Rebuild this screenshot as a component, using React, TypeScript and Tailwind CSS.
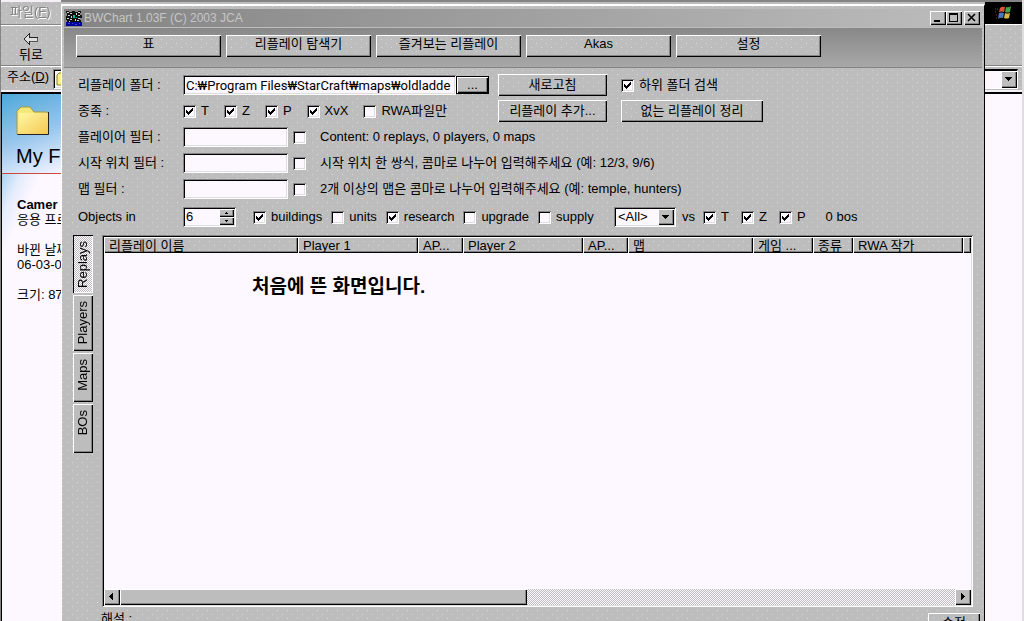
import { useState, type ReactNode } from "react";
import clsx from "clsx";

// classic 3D edges
const RAISED = "shadow-[inset_1px_1px_#fff,inset_-1px_-1px_#000,inset_-2px_-2px_#848484]";
const SUNKEN = "shadow-[inset_1px_1px_#848484,inset_-1px_-1px_#fff,inset_2px_2px_#000,inset_-2px_-2px_#dedede]";
const SPECKLE =
  "bg-[#bdbdbd] bg-[conic-gradient(at_1px_1px,transparent_75%,#dadada_0),conic-gradient(at_1px_1px,transparent_75%,#dadada_0)] bg-[length:10px_8px] bg-[position:0_0,5px_4px]";
const DITHER = "bg-[repeating-conic-gradient(#fdf7ff_0_25%,#bdbdbd_0_50%)] bg-[length:2px_2px]";

const COLUMNS = [
  { name: "리플레이 이름", width: 194 },
  { name: "Player 1", width: 120 },
  { name: "AP...", width: 45 },
  { name: "Player 2", width: 120 },
  { name: "AP...", width: 45 },
  { name: "맵", width: 125 },
  { name: "게임 ...", width: 60 },
  { name: "종류", width: 40 },
  { name: "RWA 작가", width: 110 },
];

const TABS = [
  { name: "Replays", height: "h-[58px]" },
  { name: "Players", height: "h-[56px]" },
  { name: "Maps", height: "h-[49px]" },
  { name: "BOs", height: "h-[49px]" },
];

function Button({ children, className }: { children: ReactNode; className?: string }) {
  return (
    <button type="button" className={clsx("shrink-0 whitespace-nowrap", SPECKLE, RAISED, className)}>
      {children}
    </button>
  );
}

function Check({ label, name, checked }: { label?: string; name?: string; checked?: boolean }) {
  return (
    <label className="flex shrink-0 items-center gap-[5px] whitespace-nowrap">
      <span className="grid">
        <input
          type="checkbox"
          defaultChecked={checked}
          aria-label={name}
          className={clsx("peer col-start-1 row-start-1 size-[13px] appearance-none bg-[#fdf7ff]", SUNKEN)}
        />
        <svg
          viewBox="0 0 13 13"
          shapeRendering="crispEdges"
          className="pointer-events-none invisible col-start-1 row-start-1 size-[13px] peer-checked:visible"
        >
          <path d="M3 5h1v1h1v1h1v-1h1v-1h1v-1h1v-1h1v3h-1v1h-1v1h-1v1h-1v1h-1v-1h-1v-1h-1z" />
        </svg>
      </span>
      {label}
    </label>
  );
}

function Arrow({ d, className }: { d: string; className: string }) {
  return (
    <svg viewBox="0 0 8 8" shapeRendering="crispEdges" className={className}>
      <path d={d} />
    </svg>
  );
}

function FilterRow({ id, label, checkName, hint }: { id: string; label: string; checkName: string; hint: string }) {
  return (
    <div className="flex h-[26px] items-center whitespace-nowrap">
      <label htmlFor={id} className="w-[105px] shrink-0">{label}</label>
      <input id={id} className={clsx("h-5 w-[105px] shrink-0 bg-[#fdf7ff] px-1", SUNKEN)} />
      <div className="mr-[14px] ml-[5px]"><Check name={checkName} /></div>
      <span>{hint}</span>
    </div>
  );
}

function AppIcon() {
  return (
    <svg viewBox="0 0 16 16" shapeRendering="crispEdges" className="size-4">
      <path d="M0 0h16v16h-16z" fill="#848484" />
      <path d="M0 1h3v1h3v-1h3v1h3v-1h3v2h-1v2h2v3h-2v2h1v2h-14v-2h-1v-4h1v-3h-1z" fill="#101010" />
      <path d="M1 2h2v1h-2zM4 3h2v1h-2zM12 2h2v1h-2zM10 3h1v2h-1zM2 5h2v1h-2zM5 6h1v2h-1zM12 5h2v1h-2zM1 8h2v1h-2zM4 9h2v1h-2zM9 9h1v2h-1zM12 8h2v1h-2zM3 11h1v1h-1zM11 10h2v1h-2z" fill="#c8d4d4" />
      <path d="M7 5h2v3h-2zM10 7h1v1h-1z" fill="#00b898" />
      <path d="M0 12h16v4h-16z" fill="#0000a0" />
      <path d="M2 13h2v1h-2zM6 13h1v1h-1zM9 14h2v1h-2zM13 13h1v1h-1z" fill="#3a4ac8" />
    </svg>
  );
}

function ExplorerLeft() {
  return (
    <div className="flex w-[61px] shrink-0 flex-col overflow-hidden border-l border-[#848484] whitespace-nowrap">
      <div className={clsx("h-[25px] border-t-2 border-b border-t-[#f4f0f6] border-b-[#848484] pl-[9px] text-[#848484]", SPECKLE)}>
        <span className="leading-5 drop-shadow-[1px_1px_#fff]">파일(<u>F</u>)</span>
      </div>
      <button type="button" className={clsx("flex h-[41px] flex-col items-start border-t border-b border-t-white border-b-[#848484] pt-[7px] pl-[18px] leading-[17px]", SPECKLE)}>
        <svg viewBox="0 0 16 13" className="ml-1 h-[13px] w-4" shapeRendering="crispEdges">
          <path d="M6 1v3h8v4h-8v3l-5-5z" fill="#dedede" stroke="#222" />
          <path d="M7 8h8M14.500 5v4" stroke="#555" />
        </svg>
        뒤로
      </button>
      <div className={clsx("flex h-[26px] items-center border-t border-b-2 border-t-white border-b-[#f4f0f6] pl-[6px]", SPECKLE)}>
        <span className="w-[46px] shrink-0 pb-[3px]">주소(<u>D</u>)</span>
        <div className={clsx("h-5 w-6 shrink-0 bg-[#fdf7ff] pt-[3px] pl-[3px]", SUNKEN)}>
          <svg viewBox="0 0 16 14" className="h-[14px] w-4">
            <path d="M1 3l2-2h4l2 2h6v10h-14z" fill="#fff08c" stroke="#8c8420" />
          </svg>
        </div>
      </div>
      <div className="flex-1 border-t-2 border-l border-black bg-[#fdf7ff]">
        <div className="h-[80px] border-b border-[#d04a3c] bg-linear-160 from-[#4aa8d8] via-[#94c4ec] via-50% to-[#f4f4ff] pt-[12px] pl-[14px]">
          <svg viewBox="0 0 34 30" className="h-[30px] w-[34px]">
            <defs>
              <linearGradient id="folder" x1="0" y1="0" x2="1" y2="1">
                <stop offset="0" stopColor="#fff8a8" />
                <stop offset="1" stopColor="#f4c850" />
              </linearGradient>
            </defs>
            <path d="M1 28V5l4-4h9l4 5h13v22z" fill="#f6e878" stroke="#a89838" />
            <path d="M3 7h29v21h-30z" fill="url(#folder)" />
            <path d="M32.500 6v22.500h-31" fill="none" stroke="#222" />
          </svg>
          <p className="mt-[8px] text-xl leading-6">My F</p>
        </div>
        <div className="h-[220px] bg-[linear-gradient(115deg,#a8d4f0,#e4ecfc_12%,#fdf7ff_24%)] pt-[23px] pl-[15px] leading-[15px]">
          <p className="font-bold">Camer</p>
          <p>응용 프로</p>
          <p className="mt-[15px]">바뀐 날짜</p>
          <p>06-03-0</p>
          <p className="mt-[15px]">크기: 87</p>
        </div>
      </div>
    </div>
  );
}

function ExplorerRight() {
  return (
    <div className="flex w-[39px] shrink-0 flex-col border-r-2 border-[#dedede]">
      <div className="grid h-[25px] place-items-center border-t-2 border-b border-t-[#848484] border-b-white bg-black">
        <svg viewBox="0 0 18 16" className="h-4 w-[18px]">
          <path d="M5 3q2-2 5-1l-1 5q-2-1-5 0z" fill="#d8583c" />
          <path d="M11 2q3 1 5-1l-1 6q-3 1-5 0z" fill="#48a048" />
          <path d="M4 8q2-1 5 0l-1 5q-3-1-5 1z" fill="#4878c0" />
          <path d="M10 8q2 1 5 0l-1 5q-2 1-5 0z" fill="#d8b840" />
          <path d="M0 4h3M0 7h2M1 10h2M1 13h1" stroke="#7a3848" strokeDasharray="1 1" />
        </svg>
      </div>
      <div className={clsx("h-[41px] border-b border-[#848484]", SPECKLE)} />
      <div className={clsx("flex h-[26px] items-center border-t border-b-2 border-t-white border-b-[#f4f0f6]", SPECKLE)}>
        <div className="flex h-5 w-[33px] justify-end border-t-2 border-r border-b border-t-black border-r-white border-b-white bg-[#fdf7ff]">
          <button type="button" aria-label="주소 목록" className={clsx("grid w-4 place-items-center bg-[#bdbdbd]", RAISED)}>
            <Arrow d="M0 2h7v1h-1v1h-1v1h-1v1h-1v-1h-1v-1h-1v-1h-1z" className="size-2" />
          </button>
        </div>
      </div>
      <div className="flex-1 border-t-2 border-black bg-[#fdf7ff]" />
    </div>
  );
}

function TitleBar() {
  const control = clsx("grid h-[14px] w-4 place-items-center bg-[#bdbdbd]", RAISED);
  return (
    <div className="flex h-[18px] items-center bg-linear-to-r from-[#848484] to-[#bdbdbd] px-[2px]">
      <AppIcon />
      <h1 className="ml-[2px] flex-1 text-xs whitespace-nowrap text-[#c6c6c6]">BWChart 1.03F (C) 2003 JCA</h1>
      <button type="button" aria-label="최소화" className={control}>
        <svg viewBox="0 0 16 14" className="h-[14px] w-4"><path d="M4 9h6v2h-6z" /></svg>
      </button>
      <button type="button" aria-label="최대화" className={control}>
        <svg viewBox="0 0 16 14" className="h-[14px] w-4" shapeRendering="crispEdges">
          <path fillRule="evenodd" d="M3 2h9v9h-9zM4 4v6h7v-6z" />
        </svg>
      </button>
      <button type="button" aria-label="닫기" className={clsx(control, "ml-[2px]")}>
        <svg viewBox="0 0 16 14" className="h-[14px] w-4"><path d="M4 3l7 7M11 3l-7 7" stroke="#000" strokeWidth="1.600" /></svg>
      </button>
    </div>
  );
}

function Options() {
  return (
    <form className="mb-[3px] pt-[4px] pr-2 pl-[14px]" onSubmit={e => e.preventDefault()}>
      <div className="flex h-[26px] items-center">
        <label htmlFor="folder-path" className="w-[105px] shrink-0 whitespace-nowrap">리플레이 폴더 :</label>
        <div className="flex w-[315px] shrink-0 items-center">
          <input
            id="folder-path"
            defaultValue="C:₩Program Files₩StarCraft₩maps₩oldladde"
            className={clsx("h-5 w-[273px] bg-[#fdf7ff] px-[3px] font-['Roboto','Noto_Sans_CJK_KR',sans-serif]", SUNKEN)}
          />
          <button type="button" className={clsx("h-[18px] w-[33px] border border-black bg-[#bdbdbd] leading-3", RAISED)}>
            ...
          </button>
        </div>
        <Button className="mr-[14px] h-[22px] w-[109px]">새로고침</Button>
        <Check label="하위 폴더 검색" checked />
      </div>

      <div className="flex h-[26px] items-center">
        <span className="w-[105px] shrink-0">종족 :</span>
        <div className="flex w-[315px] shrink-0 gap-[15px]">
          <Check label="T" checked />
          <Check label="Z" checked />
          <Check label="P" checked />
          <Check label="XvX" checked />
          <Check label="RWA파일만" />
        </div>
        <Button className="mr-[14px] h-[22px] w-[109px]">리플레이 추가...</Button>
        <Button className="h-[22px] w-[142px]">없는 리플레이 정리</Button>
      </div>

      <FilterRow id="player" label="플레이어 필터 :" checkName="플레이어 필터 사용" hint="Content: 0 replays, 0 players, 0 maps" />
      <FilterRow id="start" label="시작 위치 필터 :" checkName="시작 위치 필터 사용" hint="시작 위치 한 쌍식, 콤마로 나누어 입력해주세요 (예: 12/3, 9/6)" />
      <FilterRow id="map" label="맵 필터 :" checkName="맵 필터 사용" hint="2개 이상의 맵은 콤마로 나누어 입력해주세요 (예: temple, hunters)" />

      <div className="flex h-[30px] items-center whitespace-nowrap">
        <label htmlFor="objects" className="w-[105px] shrink-0">Objects in</label>
        <div className={clsx("mr-[17px] flex h-5 w-[53px] shrink-0 bg-[#fdf7ff] p-[2px]", SUNKEN)}>
          <input id="objects" defaultValue="6" className="min-w-0 flex-1 pl-[1px] leading-4 outline-none" />
          <div className="flex w-[15px] flex-col">
            <button type="button" aria-label="늘리기" className={clsx("grid flex-1 place-items-center bg-[#bdbdbd]", RAISED)}>
              <Arrow d="M3 3h1v1h1v1h-3v-1h1z" className="size-2" />
            </button>
            <button type="button" aria-label="줄이기" className={clsx("grid flex-1 place-items-center bg-[#bdbdbd]", RAISED)}>
              <Arrow d="M2 3h3v1h-1v1h-1v-1h-1z" className="size-2" />
            </button>
          </div>
        </div>
        <div className="flex w-[361px] shrink-0 gap-[9px]">
          <Check label="buildings" checked />
          <Check label="units" />
          <Check label="research" checked />
          <Check label="upgrade" />
          <Check label="supply" />
        </div>
        <div className={clsx("grid h-5 w-[62px] shrink-0 grid-cols-[1fr_16px] bg-[#fdf7ff] p-[2px]", SUNKEN)}>
          <select aria-label="종족 선택" className="col-span-2 col-start-1 row-start-1 appearance-none pl-[2px] leading-4 outline-none">
            <option>&lt;All&gt;</option>
          </select>
          <span className={clsx("pointer-events-none col-start-2 row-start-1 grid place-items-center bg-[#bdbdbd]", RAISED)}>
            <Arrow d="M0 2h7v1h-1v1h-1v1h-1v1h-1v-1h-1v-1h-1v-1h-1z" className="size-2" />
          </span>
        </div>
        <span className="mr-[8px] ml-[6px]">vs</span>
        <div className="flex gap-[12px]">
          <Check label="T" checked />
          <Check label="Z" checked />
          <Check label="P" checked />
        </div>
        <span className="ml-[20px]">0 bos</span>
      </div>
    </form>
  );
}

function ReplayList() {
  return (
    <div className={clsx("flex min-w-0 flex-1 flex-col overflow-hidden bg-[#fdf7ff] p-[2px]", SUNKEN)}>
      <table className="w-full table-fixed border-collapse">
        <colgroup>
          {COLUMNS.map((c, i) => <col key={i} style={{ width: c.width }} />)}
          <col />
        </colgroup>
        <thead>
          <tr>
            {COLUMNS.map((c, i) => (
              <th key={i} className={clsx("h-4 overflow-hidden p-0 pl-[5px] text-left leading-[15px] font-normal whitespace-nowrap", SPECKLE, RAISED)}>
                {c.name}
              </th>
            ))}
            <td className={clsx("p-0", SPECKLE, RAISED)} />
          </tr>
        </thead>
      </table>
      <p className="flex-1 pt-[22px] pl-[148px] text-[19px] leading-6 font-bold">처음에 뜬 화면입니다.</p>
      <div className={clsx("flex h-4 shrink-0", DITHER)}>
        <button type="button" aria-label="왼쪽" className={clsx("grid w-4 place-items-center bg-[#bdbdbd]", RAISED)}>
          <Arrow d="M5 0v7h-1v-1h-1v-1h-1v-1h-1v-1h1v-1h1v-1h1v-1z" className="size-2" />
        </button>
        <div className={clsx("w-[47%] bg-[#bdbdbd]", RAISED)} />
        <button type="button" aria-label="오른쪽" className={clsx("ml-auto grid w-4 place-items-center bg-[#bdbdbd]", RAISED)}>
          <Arrow d="M2 0v7h1v-1h1v-1h1v-1h1v-1h-1v-1h-1v-1h-1v-1z" className="size-2" />
        </button>
      </div>
    </div>
  );
}

export default function App() {
  const [tab, setTab] = useState("Replays");

  return (
    <div className="flex h-screen overflow-hidden bg-[#bdbdbd] font-['Liberation_Sans','Noto_Sans_CJK_KR',sans-serif] text-[13px] leading-4 text-black">
      <ExplorerLeft />

      <div className="flex min-w-0 flex-1 flex-col border-t-2 border-[#848484]">
        <main className={clsx("mt-[2px] flex min-h-0 flex-1 flex-col border-t-2 border-r border-l border-t-white border-r-black border-l-white px-[2px] pt-[3px]", SPECKLE)}>
          <TitleBar />
          <nav className="flex gap-[5px] border-t border-b border-t-[#bdbdbd] border-b-[#848484] bg-linear-to-b from-[#888] to-[#a8a8a8] px-3 pt-[7px] pb-[10px]">
            {["표", "리플레이 탐색기", "즐겨보는 리플레이", "Akas", "설정"].map(name => (
              <Button key={name} className="h-[22px] w-[145px] pb-1">{name}</Button>
            ))}
          </nav>

          <Options />

          <div className="flex min-h-0 flex-1 px-[9px]">
            <div role="tablist" className="mr-[9px] flex w-5 shrink-0 flex-col gap-[2px]">
              {TABS.map(t => (
                <button
                  key={t.name}
                  type="button"
                  role="tab"
                  aria-selected={tab === t.name}
                  onClick={() => setTab(t.name)}
                  className={clsx(
                    "flex items-start justify-center pt-[6px]",
                    t.height,
                    tab === t.name ? [DITHER, "shadow-[inset_1px_1px_#000,inset_-1px_-1px_#fff]"] : ["bg-[#bdbdbd]", RAISED],
                  )}
                >
                  <span className="rotate-180 [writing-mode:vertical-rl]">{t.name}</span>
                </button>
              ))}
            </div>
            <ReplayList />
          </div>

          <div className="flex h-[14px] shrink-0 items-start justify-between overflow-hidden pt-[4px] pr-[2px] pl-[37px]">
            <span>해설 :</span>
            <Button className="mt-[2px] h-[20px] w-[52px]">수정</Button>
          </div>
        </main>
      </div>

      <ExplorerRight />
    </div>
  );
}
